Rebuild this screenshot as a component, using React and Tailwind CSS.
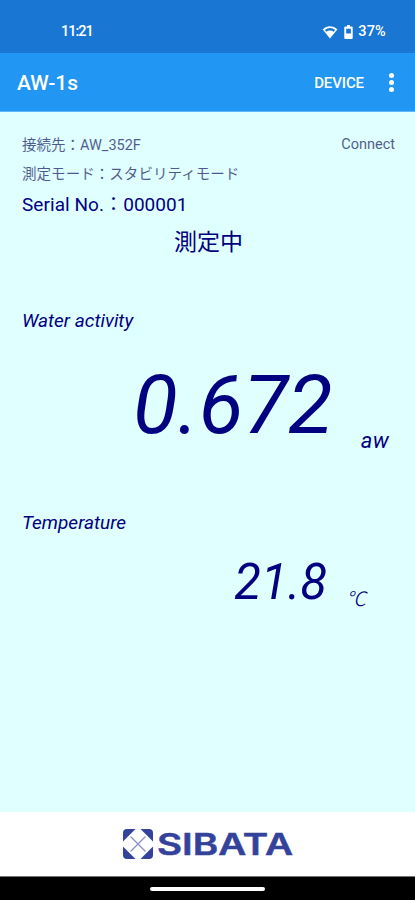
import React from "react";

const connection = {
  target: "接続先：AW_352F",
  status: "Connect",
  mode: "測定モード：スタビリティモード",
  serial: "Serial No.：000001",
  state: "測定中",
};

function WifiIcon() {
  return (
    <svg viewBox="0 0 16 14" className="h-[14px] w-4" fill="none">
      <path d="M8 13.500 L.7 4.500 C4.700 .3 11.300 .3 15.300 4.500 Z" fill="#fff" />
      <path d="M2.900 4.900 C6 2.200 10 2.200 13.100 4.900 L11.700 6.700 C9.500 5 6.500 5 4.300 6.700 Z" fill="#1976d2" />
    </svg>
  );
}

function BatteryIcon() {
  return (
    <svg viewBox="0 0 9 15" className="h-[14px] w-[9px]">
      <path
        fill="#fff"
        fillRule="evenodd"
        d="M3 0h3v1.700h2c.6 0 1 .4 1 1V14c0 .6-.4 1-1 1H1c-.6 0-1-.4-1-1V2.700c0-.6.4-1 1-1h2zM2 4v5h5V4z"
      />
    </svg>
  );
}

function StatusBar() {
  return (
    <div className="flex h-[53px] items-start justify-between bg-[#1976d2] pl-[61px] pr-[29px] pt-[22px] text-[14.5px] font-medium leading-5 text-white">
      <span className="tracking-[-1px]">11:21</span>
      <div className="flex h-5 items-center">
        <WifiIcon />
        <span className="ml-[6px]">
          <BatteryIcon />
        </span>
        <span className="ml-[5px] tracking-[0.2px]">37%</span>
      </div>
    </div>
  );
}

function AppBar() {
  return (
    <header className="flex h-[59px] items-center border-b border-[#64b5f6] bg-[#2196f3] pl-[17px] pr-[21px] text-white">
      <h1 className="flex-1 pt-1 text-[21px] font-medium">AW-1s</h1>
      <button type="button" className="pt-[2px] text-[15px] font-medium tracking-[-0.1px]">
        DEVICE
      </button>
      <button type="button" className="ml-[25px] flex flex-col gap-[2px]">
        <span className="size-[5px] rounded-full bg-white" />
        <span className="size-[5px] rounded-full bg-white" />
        <span className="size-[5px] rounded-full bg-white" />
      </button>
    </header>
  );
}

function Reading({ label, children }) {
  return (
    <section>
      <h2 className="h-7 text-[19px] italic leading-7">{label}</h2>
      {children}
    </section>
  );
}

function Logo() {
  return (
    <svg viewBox="0 0 170 40" className="h-10 w-[170px]">
      <rect x="0" y="5" width="30" height="30" rx="4" fill="#33429b" />
      <path d="M12.500 5 H17.500 L30 17.500 V22.500 L17.500 35 H12.500 L0 22.500 V17.500 Z" fill="#fff" />
      <path
        d="M7.500 12.500 L22.500 27.500 M22.500 12.500 L7.500 27.500"
        stroke="#8c8fc4"
        strokeWidth="1.300"
      />
      <text
        x="34"
        y="31"
        fill="#33429b"
        stroke="#33429b"
        strokeWidth=".5"
        fontSize="29.500"
        fontWeight="600"
        fontFamily="Inter, sans-serif"
        textLength="136"
        lengthAdjust="spacingAndGlyphs"
      >
        SIBATA
      </text>
    </svg>
  );
}

export default function App() {
  return (
    <div className="flex h-[900px] w-[415px] flex-col overflow-hidden bg-[#e0ffff] font-['Roboto','Noto_Sans_CJK_JP',sans-serif] text-[#000080]">
      <StatusBar />
      <AppBar />

      <main className="flex-1 px-[22px] pt-5">
        <div className="flex h-7 items-center justify-between text-[14.5px] text-[#000050]/65">
          <span>{connection.target}</span>
          <span className="mr-[-2px] -mt-[2px]">{connection.status}</span>
        </div>
        <p className="h-7 text-[14.5px] leading-[29px] tracking-[0.05px] text-[#000050]/65">{connection.mode}</p>
        <p className="h-[34px] text-[19px] leading-[34px] tracking-[0.06px]">{connection.serial}</p>
        <p className="h-10 pl-[2px] text-center text-[23px] leading-[42px]">{connection.state}</p>

        <div className="mt-[45px]">
          <Reading label="Water activity">
            <div className="mt-5 flex h-[100px] items-baseline justify-end italic">
              <span className="text-[82px] leading-[100px]">0.672</span>
              <span className="ml-[28px] mr-1 translate-y-[15px] text-[22px] tracking-[0.3px]">aw</span>
            </div>
          </Reading>
        </div>

        <div className="mt-[54px]">
          <Reading label="Temperature">
            <div className="mt-4 flex h-[60px] items-baseline justify-end italic">
              <span className="text-[49px] leading-[59px]">21.8</span>
              <span className="ml-[19px] mr-[27px] translate-y-[7px] text-[20px] font-light">℃</span>
            </div>
          </Reading>
        </div>
      </main>

      <footer>
        <div className="flex h-[64px] items-center justify-center bg-white">
          <Logo />
        </div>
        <div className="flex h-6 items-center justify-center border-t border-[#777] bg-black">
          <span className="h-1 w-[115px] rounded-full bg-white" />
        </div>
      </footer>
    </div>
  );
}
